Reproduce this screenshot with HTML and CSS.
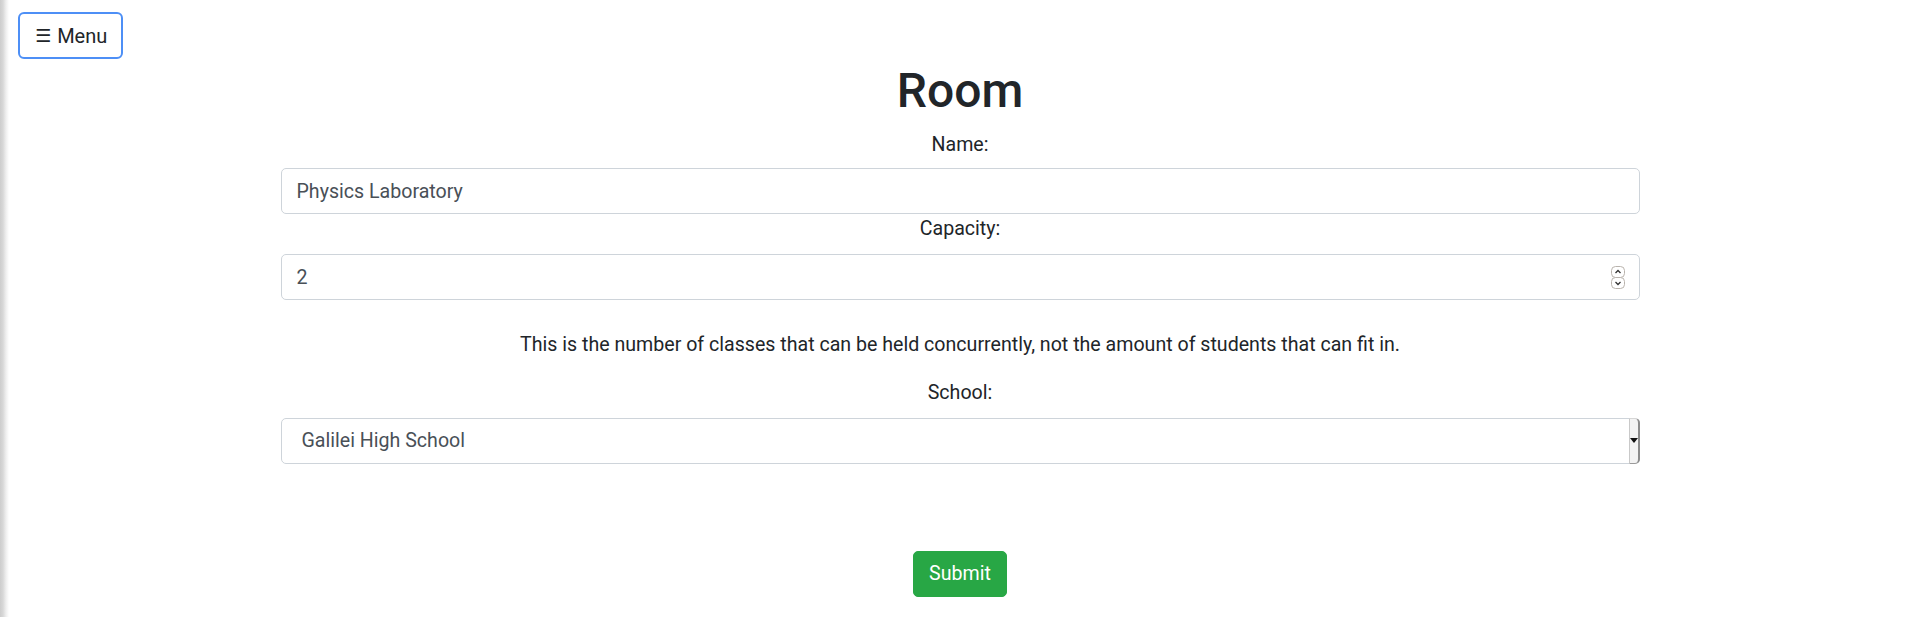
FILE: index.html
```html
<!DOCTYPE html>
<html lang="en">
<head>
<meta charset="utf-8">
<title>Room</title>
<link rel="stylesheet" href="styles.css">
</head>
<body>
<div class="page">
  <button class="menu-btn" type="button"><span class="burger">☰</span> Menu</button>
  <h1 class="title">Room</h1>
  <form class="room-form">
    <label class="field-label" for="name">Name:</label>
    <input class="field" id="name" type="text" value="Physics Laboratory">
    <label class="field-label" for="capacity">Capacity:</label>
    <div class="number-wrap">
      <input class="field field-number" id="capacity" type="number" value="2">
      <svg class="spinner" width="14" height="23" viewBox="0 0 14 23" aria-hidden="true">
        <rect x="0.5" y="0.5" width="13" height="11" rx="4" fill="#fff" stroke="#b9b3ad"/>
        <rect x="0.5" y="11.5" width="13" height="11" rx="4" fill="#fff" stroke="#b9b3ad"/>
        <path d="M4.5 7 L7 4.5 L9.5 7" fill="none" stroke="#333" stroke-width="1.3"/>
        <path d="M4.5 16 L7 18.5 L9.5 16" fill="none" stroke="#333" stroke-width="1.3"/>
      </svg>
    </div>
    <p class="help">This is the number of classes that can be held concurrently, not the amount of students that can fit in.</p>
    <label class="field-label" for="school">School:</label>
    <div class="select-wrap">
      <select class="field field-select" id="school">
        <option>Galilei High School</option>
      </select>
      <span class="select-btn"><span class="arrow"></span></span>
    </div>
    <div class="actions">
      <button class="submit" type="submit">Submit</button>
    </div>
  </form>
</div>
</body>
</html>
```
FILE: styles.css
```css
html, body {
  margin: 0;
  padding: 0;
}
body {
  background: #fff linear-gradient(to right, #cdcdcd 0, #d8d8d8 3px, #efefef 6px, #fff 9px) left top / 10px 100% repeat-y;
  font-family: Roboto, "Liberation Sans", sans-serif;
  color: #212529;
  font-size: 19.6px;
  line-height: 30px;
  min-height: 617px;
}
.page {
  padding-top: 12px;
}
.menu-btn {
  display: flex;
  align-items: center;
  margin-left: 18px;
  height: 47px;
  padding: 0 14px 0 15px;
  box-sizing: border-box;
  background: #fff;
  border: 2px solid #4d8ff6;
  border-radius: 6px;
  font-family: Roboto, "DejaVu Sans", sans-serif;
  font-size: 20px;
  color: #212529;
  cursor: pointer;
}
.burger {
  font-family: "DejaVu Sans", sans-serif;
  font-size: 18px;
  margin-right: 6px;
}
.title {
  margin: 3px 0 10.3px;
  text-align: center;
  font-size: 48px;
  font-weight: 500;
  line-height: 57.6px;
}
.room-form {
  width: 1359px;
  margin: 0 auto;
}
.field-label {
  display: block;
  text-align: center;
  margin-bottom: 10px;
}
.field-label:first-child {
  margin-bottom: 8.2px;
}
.field {
  display: block;
  width: 100%;
  box-sizing: border-box;
  height: 46px;
  padding: 0 15px;
  border: 1px solid #ced4da;
  border-radius: 5px;
  background: #fff;
  font-family: Roboto, sans-serif;
  font-size: 19.6px;
  color: #495057;
  outline: none;
}
.number-wrap, .select-wrap {
  position: relative;
}
.field-number {
  -moz-appearance: textfield;
}
.field-number::-webkit-inner-spin-button,
.field-number::-webkit-outer-spin-button {
  -webkit-appearance: none;
  margin: 0;
}
.spinner {
  position: absolute;
  right: 15px;
  top: 50%;
  margin-top: -11px;
}
.help {
  margin: 30px 0 17.5px;
  text-align: center;
}
.field-select {
  -webkit-appearance: none;
  appearance: none;
  padding-left: 20px;
}
.select-btn {
  position: absolute;
  top: 0;
  right: 0;
  bottom: 0;
  width: 11px;
  box-sizing: border-box;
  background: #f3f3f3;
  border-left: 1px solid #c9c9c9;
  border-right: 2px solid #8b8b8b;
  border-bottom: 1px solid #9a9a9a;
  border-top: 1px solid #d6d6d6;
  border-radius: 0 5px 5px 0;
  display: flex;
  align-items: center;
  justify-content: center;
}
.arrow {
  width: 0;
  height: 0;
  border-left: 4px solid transparent;
  border-right: 4px solid transparent;
  border-top: 5px solid #111;
}
.actions {
  display: flex;
  justify-content: center;
  margin-top: 87.4px;
}
.submit {
  height: 46px;
  padding: 0 15px;
  background: #28a745;
  border: 1px solid #28a745;
  border-radius: 5px;
  color: #fff;
  font-family: Roboto, sans-serif;
  font-size: 19.6px;
  cursor: pointer;
}
```
